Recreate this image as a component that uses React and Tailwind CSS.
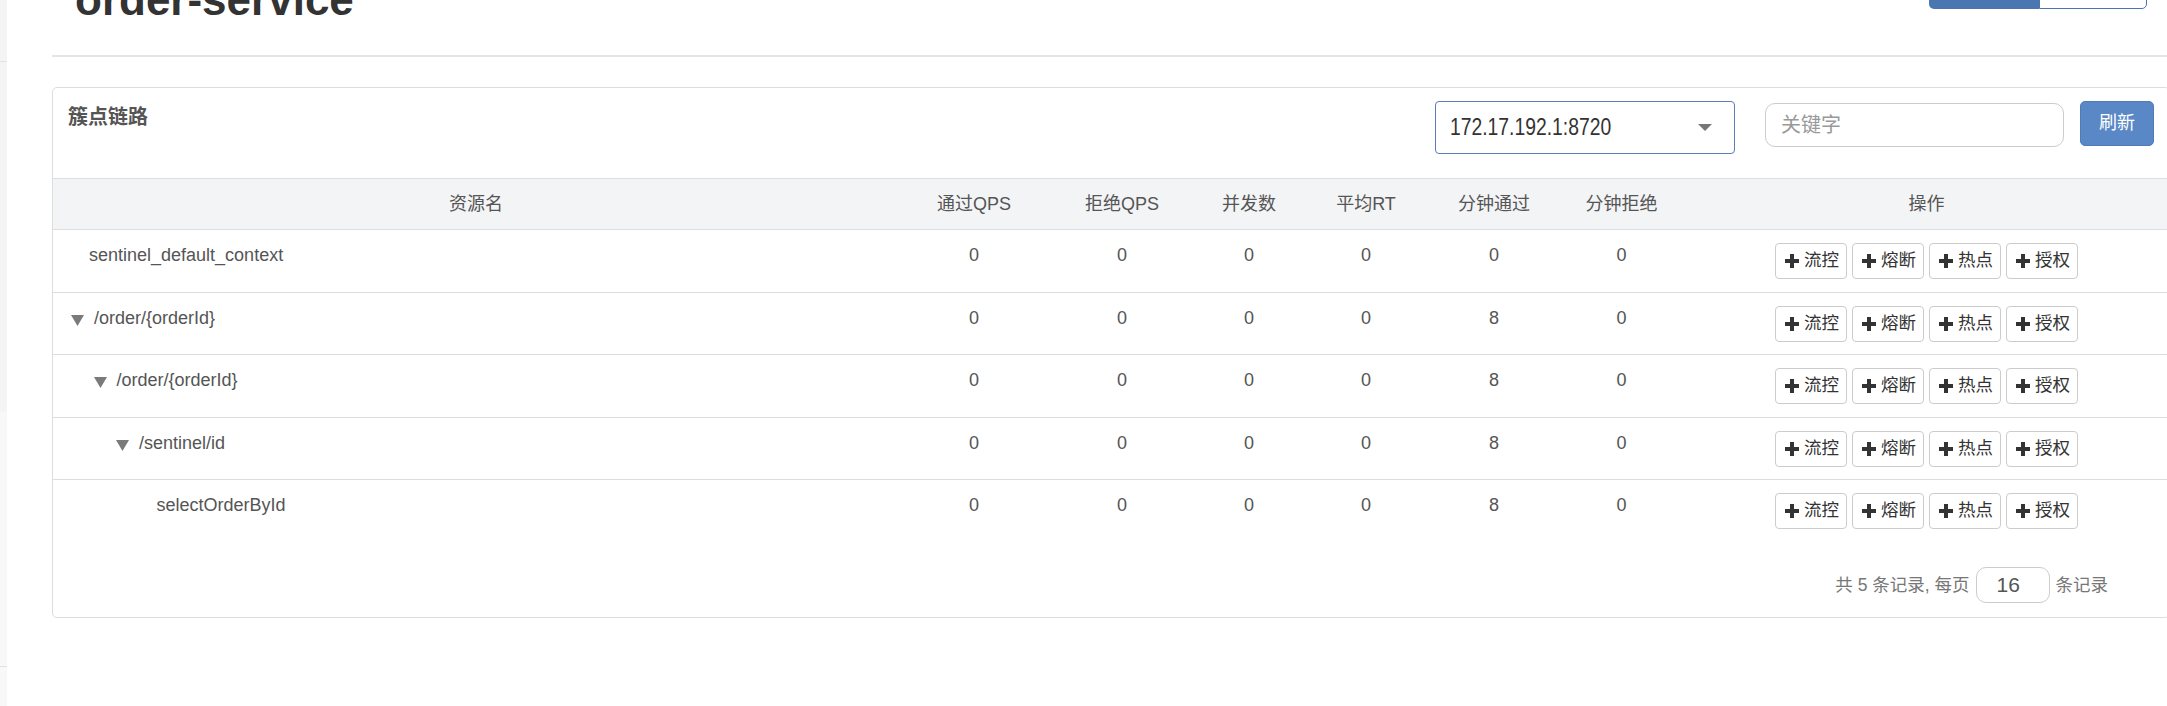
import React from 'react';

const rows = [
  { name: 'sentinel_default_context', pad: 'pl-[36px]', leaf: true, v: [0, 0, 0, 0, 0, 0] },
  { name: '/order/{orderId}', pad: 'pl-[18px]', leaf: false, v: [0, 0, 0, 0, 8, 0] },
  { name: '/order/{orderId}', pad: 'pl-[40.5px]', leaf: false, v: [0, 0, 0, 0, 8, 0] },
  { name: '/sentinel/id', pad: 'pl-[63px]', leaf: false, v: [0, 0, 0, 0, 8, 0] },
  { name: 'selectOrderById', pad: 'pl-[103.5px]', leaf: true, v: [0, 0, 0, 0, 8, 0] },
];

const headers = ['资源名', '通过QPS', '拒绝QPS', '并发数', '平均RT', '分钟通过', '分钟拒绝', '操作'];
const actions = ['流控', '熔断', '热点', '授权'];

const gridCols = 'grid grid-cols-[846px_150px_146px_108px_126px_130px_125px_485px]';

function Plus() {
  return (
    <svg width="14" height="14" viewBox="0 0 14 14" className="shrink-0">
      <path d="M5 0h4v5h5v4H9v5H5V9H0V5h5z" fill="#333" />
    </svg>
  );
}

function Caret() {
  return (
    <svg width="13" height="11" viewBox="0 0 13 11" className="shrink-0 mt-[10px]">
      <path d="M0 0H13L6.5 11Z" fill="#7a7a7a" />
    </svg>
  );
}

function App() {
  return (
    <div className="w-[2167px] h-[706px] overflow-hidden bg-white flex font-['Liberation_Sans','Noto_Sans_CJK_SC',sans-serif]">
      {/* sidebar edge */}
      <div className="w-[7px] shrink-0 flex flex-col">
        <div className="h-[61px] bg-[#f4f4f4]" />
        <div className="h-px bg-[#e2e2e2]" />
        <div className="h-[350px] bg-[#f4f4f4]" />
        <div className="h-[254px] bg-[#f8f8f8]" />
        <div className="h-px bg-[#e2e2e2]" />
        <div className="flex-1 bg-[#f8f8f8]" />
      </div>

      <div className="flex-1 min-w-0 pl-[45px]">
        <header className="h-[55px] flex">
          <h1 className="-mt-[22px] pl-[23px] text-[44px] leading-[44px] font-bold text-[#333]">order-service</h1>
          <div className="ml-auto mr-[20px] -mt-[31px] h-[40px] flex">
            <div className="w-[110px] h-full bg-[#4a76b2] rounded-bl-[5px]" />
            <div className="w-[108px] h-full bg-white border border-[#4a76b2] rounded-br-[5px]" />
          </div>
        </header>
        <div className="h-[2px] bg-[#e5e5e5]" />

        <div className="mt-[30px] w-[2118px] border border-[#dddddd] rounded-[5px]">
          <div className="flex items-start h-[90px] pt-[13px] pl-[15px] pr-[15px]">
            <h3 className="mt-[2px] text-[20px] leading-[28px] font-bold text-[#555]">簇点链路</h3>
            <div className="ml-auto w-[300px] h-[53px] border border-[#5a7db5] rounded-[4px] flex items-center pl-[14px] pr-[22px]">
              <span className="inline-block origin-left scale-x-[0.84] text-[23px] text-[#333]">172.17.192.1:8720</span>
              <svg width="14" height="7" viewBox="0 0 14 7" className="ml-auto">
                <path d="M0 0H14L7 7Z" fill="#777" />
              </svg>
            </div>
            <input
              placeholder="关键字"
              className="ml-[30px] mt-[2px] w-[299px] h-[44px] border border-[#cccccc] rounded-[10px] pl-[15px] text-[20px] text-[#555] placeholder:text-[#999] outline-none"
            />
            <button className="ml-[16px] w-[74px] h-[45px] rounded-[5px] bg-[#5a88c6] border border-[#4f7cb9] text-white text-[18px]">刷新</button>
          </div>

          <div className={`${gridCols} h-[52px] bg-[#f3f4f6] border-t border-b border-[#dddddd] items-center text-[18px] text-[#555]`}>
            {headers.map((h, i) => (
              <div key={i} className="text-center">{h}</div>
            ))}
          </div>

          {rows.map((r, idx) => (
            <div
              key={idx}
              className={`${gridCols} h-[62.5px] text-[18px] leading-[26px] text-[#555] ${idx < rows.length - 1 ? 'border-b border-[#dddddd]' : ''}`}
            >
              <div className={`flex items-start pt-[12px] ${r.pad}`}>
                {!r.leaf && <Caret />}
                <span className={r.leaf ? '' : 'ml-[10px]'}>{r.name}</span>
              </div>
              {r.v.map((n, i) => (
                <div key={i} className="pt-[12px] text-center">{n}</div>
              ))}
              <div className="pt-[13px] flex justify-center gap-[5px]">
                {actions.map((a) => (
                  <button
                    key={a}
                    className="w-[72px] h-[36px] border border-[#cccccc] rounded-[4px] bg-white flex items-center pl-[9px] gap-[5px] text-[17.5px] leading-none text-[#333]"
                  >
                    <Plus />
                    <span>{a}</span>
                  </button>
                ))}
              </div>
            </div>
          ))}

          <div className="flex justify-end items-center pt-[24.5px] pb-[14px] pr-[61px] text-[17.5px] text-[#777]">
            <span>共 5 条记录, 每页</span>
            <input
              defaultValue="16"
              className="mx-[6px] w-[74px] h-[36px] border border-[#cccccc] rounded-[10px] pl-[20px] text-[21px] text-[#555] outline-none"
            />
            <span>条记录</span>
          </div>
        </div>
      </div>
    </div>
  );
}

export default App;
